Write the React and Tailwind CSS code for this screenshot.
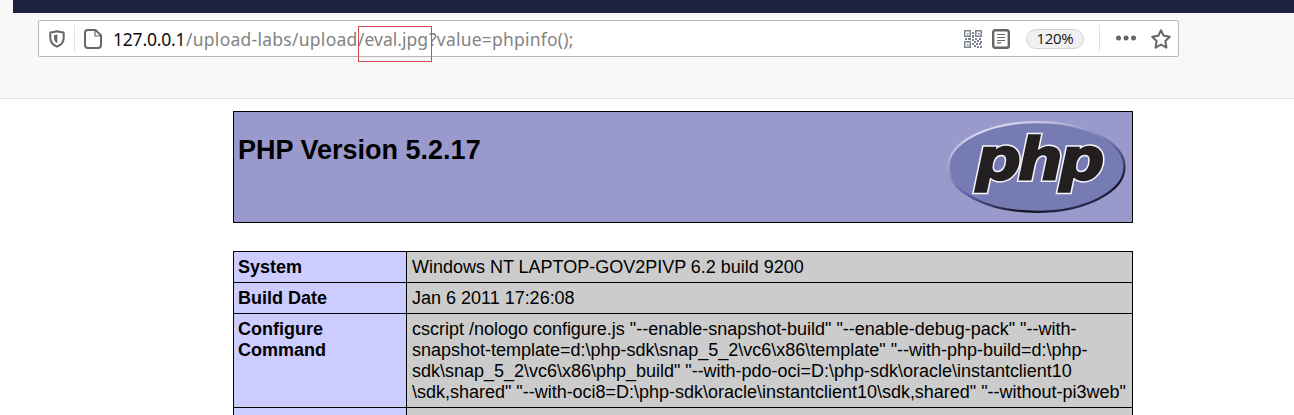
const rows = [
  { label: ['System'], value: ['Windows NT LAPTOP-GOV2PIVP 6.2 build 9200'], size: 'h-[31px]' },
  { label: ['Build Date'], value: ['Jan 6 2011 17:26:08'], size: 'h-[31px]' },
  {
    label: ['Configure', 'Command'],
    value: [
      'cscript /nologo configure.js "--enable-snapshot-build" "--enable-debug-pack" "--with-',
      'snapshot-template=d:\\php-sdk\\snap_5_2\\vc6\\x86\\template" "--with-php-build=d:\\php-',
      'sdk\\snap_5_2\\vc6\\x86\\php_build" "--with-pdo-oci=D:\\php-sdk\\oracle\\instantclient10',
      '\\sdk,shared" "--with-oci8=D:\\php-sdk\\oracle\\instantclient10\\sdk,shared" "--without-pi3web"',
    ],
    size: 'h-[94px]',
  },
  { label: [], value: [], size: 'h-[31px]' },
];

function ShieldIcon() {
  return (
    <svg className="ml-[10px] h-[18px] w-4 shrink-0" viewBox="0 0 16 18" fill="none">
      <path d="M8 1.2C5.8 2 3.6 2.3 1.3 2.4V8c0 4.300 2.700 7 6.700 8.700C12 15 14.700 12.300 14.700 8V2.400C12.400 2.300 10.200 2 8 1.200Z" stroke="#666" strokeWidth="2" strokeLinejoin="round" />
      <path d="M8.300 4.500v8.800C6 12 5 10.300 5 8V5.200Z" fill="#666" />
    </svg>
  );
}

function PageIcon() {
  return (
    <svg className="ml-[9px] h-5 w-[18px] shrink-0" viewBox="0 0 18 20" fill="none" stroke="#666" strokeWidth="2" strokeLinejoin="round">
      <path d="M4 1h7.500L17 6.500V16a3 3 0 0 1-3 3H4a3 3 0 0 1-3-3V4a3 3 0 0 1 3-3Z" />
      <path d="M11 1.500V7h5.500" strokeWidth="1.200" />
    </svg>
  );
}

function QrIcon() {
  return (
    <svg className="h-[18px] w-[18px] shrink-0" viewBox="0 0 18 18" fill="#7d8492">
      <path fillRule="evenodd" d="M0 0h7v7H0ZM1.500 1.500v4h4v-4ZM11 0h7v7h-7ZM12.500 1.500v4h4v-4ZM0 11h7v7H0ZM1.500 12.500v4h4v-4Z" />
      <path d="M3 3h1.500v1.500H3ZM14 3h1.500v1.500H14ZM3 14h1.500v1.500H3ZM8 2h2v2H8ZM8 5h2v3H8ZM1 8h2v2H1ZM4 8h3v2H4ZM8 9h2v2H8ZM11 8h2v2h-2ZM15 8h2v2h-2ZM8 13h2v2H8ZM10 11h2v2h-2ZM13 10h2v2h-2ZM16 11h2v2h-2ZM12 13h2v2h-2ZM15 13h2v2h-2ZM10 15h2v2h-2ZM13 16h2v2h-2ZM16 16h2v2h-2Z" />
    </svg>
  );
}

function ReaderIcon() {
  return (
    <svg className="ml-[10px] h-5 w-[18px] shrink-0" viewBox="0 0 18 20" fill="none" stroke="#666">
      <rect x="1.200" y="1.200" width="15.600" height="17.600" rx="2" strokeWidth="2.400" />
      <path d="M5 5.500h8M5 8.500h8M5 11.500h8M5 13.900h4" strokeWidth="1.200" />
    </svg>
  );
}

function StarIcon() {
  return (
    <svg className="ml-[15px] h-5 w-5 shrink-0" viewBox="0 0 20 20" fill="none" stroke="#666" strokeWidth="2" strokeLinejoin="round">
      <path d="M10 1.300l2.700 5.500 6.100.900-4.400 4.300 1 6.700L10 15.500l-5.400 3.200 1-6.700L1.200 7.700l6.100-.900Z" />
    </svg>
  );
}

function PhpLogo() {
  return (
    <svg className="mr-[4px] mt-[8px] h-[96px] w-[182px] shrink-0" viewBox="0 0 182 96">
      <defs>
        <linearGradient id="rim" x1="0.2" y1="0" x2="0.8" y2="1">
          <stop offset="0" stopColor="#e6e6f6" />
          <stop offset="0.250" stopColor="#a9aad4" />
          <stop offset="0.550" stopColor="#5c609b" />
          <stop offset="0.850" stopColor="#111122" />
          <stop offset="1" stopColor="#3a3d68" />
        </linearGradient>
      </defs>
      <ellipse cx="90.500" cy="47" rx="88" ry="44.800" fill="#777bb3" stroke="url(#rim)" strokeWidth="2.200" />
      <g transform="translate(29.500 60) scale(1.080 1)" fontFamily="DejaVu Sans, sans-serif" fontSize="59" fontWeight="700" fontStyle="italic" letterSpacing="-3.400" strokeLinejoin="miter">
        <text fill="#fff" stroke="#f4f4fa" strokeWidth="4.400">php</text>
        <text fill="#231f20" stroke="#231f20" strokeWidth="1.600">php</text>
      </g>
    </svg>
  );
}

function BrowserBar() {
  return (
    <header className="flex h-[99px] flex-col border-b border-[#dfdfdf] bg-[#f8f8f8]">
      <div className="ml-[13px] h-[13px] shrink-0 bg-[#1f2140]" />
      <div className="relative ml-[38px] mt-[7px] flex h-[37px] w-[1141px] items-center rounded-[2px] border border-[#b8b8b8] bg-white">
        <ShieldIcon />
        <div className="ml-[9px] h-[27px] w-px bg-[#e2e2e2]" />
        <PageIcon />
        <div className="ml-[11px] flex h-6 items-center whitespace-nowrap font-['Noto_Sans',sans-serif] text-[17.500px] leading-6 text-[#838383]">
          <span className="w-[73px] tracking-[-0.200px] text-[#0c0c0d]">127.0.0.1</span>
          <span className="w-[172px] tracking-[0.260px]">/upload-labs/upload</span>
          <span className="w-[71px]">/eval.jpg</span>
          <span className="tracking-[0.220px]">?value=phpinfo();</span>
        </div>
        <div className="flex-1" />
        <QrIcon />
        <ReaderIcon />
        <div className="ml-4 flex h-5 w-[58px] items-center justify-center rounded-full border border-[#d2d2d2] bg-[#f0f0f0] pb-px font-['Open_Sans','Noto_Sans',sans-serif] text-[15px] leading-5 tracking-[-0.300px] text-[#151515]">120%</div>
        <div className="ml-[15px] h-[27px] w-px bg-[#e2e2e2]" />
        <svg className="ml-4 h-5 w-5 shrink-0" viewBox="0 0 20 20" fill="#666">
          <circle cx="2.500" cy="9" r="2.500" />
          <circle cx="10" cy="9" r="2.500" />
          <circle cx="17.500" cy="9" r="2.500" />
        </svg>
        <StarIcon />
        <div className="w-[7px]" />
        <div className="absolute left-[319px] top-[5px] h-9 w-[74px] border border-[#d5484f]" />
      </div>
    </header>
  );
}

export default function App() {
  return (
    <div className="h-[415px] w-[1294px] overflow-hidden bg-white font-['Liberation_Sans',Arial,sans-serif] text-black">
      <BrowserBar />
      <main className="ml-[233px] mt-3 w-[900px]">
        <div className="flex h-[112px] justify-between border border-black bg-[#9999cc]">
          <h1 className="ml-1 mt-[23px] whitespace-nowrap text-[27px] font-bold leading-[30px]">PHP Version 5.2.17</h1>
          <PhpLogo />
        </div>
        <div className="mt-7 border-x border-t border-black">
          {rows.map((row, i) => (
            <div key={i} className={`flex border-b border-black text-[18px] leading-[21px] ${row.size}`}>
              <div className="w-[173px] shrink-0 border-r border-black bg-[#ccccff] pl-1 pt-[5px] font-bold">
                {row.label.map((line) => <div key={line}>{line}</div>)}
              </div>
              <div className="flex-1 whitespace-nowrap bg-[#cccccc] pl-[5px] pt-[5px] tracking-[-0.010px]">
                {row.value.map((line) => <div key={line}>{line}</div>)}
              </div>
            </div>
          ))}
        </div>
      </main>
    </div>
  );
}
